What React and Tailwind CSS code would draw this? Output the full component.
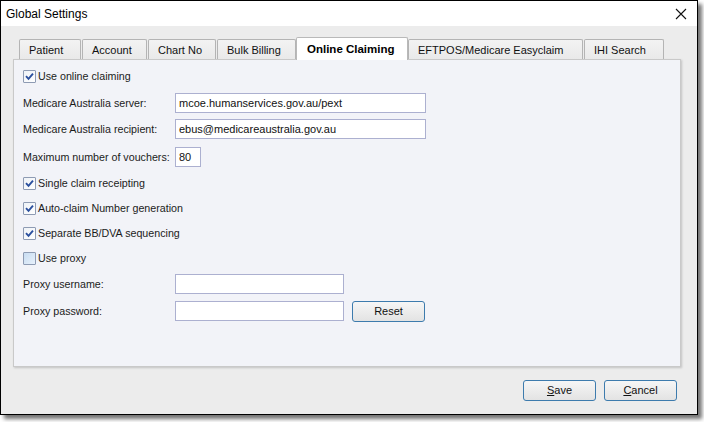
// Global Settings dialog — Online Claiming tab
const FONT = { fontFamily: '"Liberation Sans", Arial, sans-serif' };

const TABS = [
  { label: 'Patient', w: 'w-[62px]', gap: 'mr-[1px]' },
  { label: 'Account', w: 'w-[65px]', gap: 'mr-[1px]' },
  { label: 'Chart No', w: 'w-[68px]', gap: 'mr-[1px]' },
  { label: 'Bulk Billing', w: 'w-[79px]', gap: 'mr-0' },
  { label: 'Online Claiming', w: 'w-[112px]', active: true },
  { label: 'EFTPOS/Medicare Easyclaim', w: 'w-[175px]', gap: 'mr-[1px]' },
  { label: 'IHI Search', w: 'w-[80px]', gap: 'mr-0' },
];

function CheckBox({ checked }) {
  return (
    <span
      className={`w-[13px] h-[13px] shrink-0 border border-[#8e9bb3] rounded-[1px] flex items-center justify-center ${
        checked
          ? 'bg-gradient-to-br from-[#eef2f7] to-[#ffffff]'
          : 'bg-gradient-to-br from-[#c8dcf1] to-[#e8f1fb]'
      }`}
    >
      {checked && (
        <svg width="9" height="9" viewBox="0 0 9 9">
          <path d="M1 4.2 L3.5 6.8 L8 1.6" fill="none" stroke="#2a4f9e" strokeWidth="1.9" />
        </svg>
      )}
    </span>
  );
}

function CheckRow({ label, checked, className = '' }) {
  return (
    <div className={`flex items-center gap-[2px] h-[16px] ${className}`}>
      <CheckBox checked={checked} />
      <span className="leading-none">{label}</span>
    </div>
  );
}

function Field({ label, value = '', width = 'w-[251px]', className = '', children }) {
  return (
    <div className={`flex items-center h-[20px] ${className}`}>
      <span className="w-[152px] shrink-0">{label}</span>
      <div className={`${width} h-[20px] bg-white border border-[#acb0d0] flex items-center px-[3px] text-[11px] text-[#111]`}>
        {value}
      </div>
      {children}
    </div>
  );
}

function Button({ children, className = '' }) {
  return (
    <button
      className={`h-[21px] border border-[#3d7bad] rounded-[3px] bg-gradient-to-b from-[#f6f6f6] to-[#e3e3e3] text-[11px] text-[#111] flex items-center justify-center ${className}`}
      style={FONT}
    >
      {children}
    </button>
  );
}

export default function App() {
  return (
    <div className="w-[704px] h-[422px] bg-white text-[10.7px] text-[#1b1b1b]" style={FONT}>
      <div className="w-[698px] h-[415px] border border-black shadow-[4px_4px_4px_rgba(0,0,0,0.55)] flex flex-col bg-[#ececec]">
        {/* title bar */}
        <div className="h-[25px] bg-white flex items-center justify-between pl-[5px] pr-[10px]">
          <span className="text-[12px] text-black">Global Settings</span>
          <svg width="12" height="12" viewBox="0 0 12 12">
            <path d="M1 1 L11 11 M11 1 L1 11" stroke="#111" strokeWidth="1.1" />
          </svg>
        </div>

        <div className="flex flex-col px-[12px] pt-[11px]">
          {/* tab strip */}
          <div className="flex items-end h-[22px] pl-[6px] relative z-10">
            {TABS.map((t) =>
              t.active ? (
                <div
                  key={t.label}
                  className={`${t.w} h-[23px] -mb-[1px] bg-white border border-b-0 border-[#b9b9b9] rounded-t-[2px] pl-[10px] pt-[3px] font-bold text-[11.5px] text-black`}
                >
                  {t.label}
                </div>
              ) : (
                <div
                  key={t.label}
                  className={`${t.w} ${t.gap} h-[20px] bg-gradient-to-b from-[#f3f3f3] to-[#e9e9e9] border border-b-0 border-[#b4b4b4] rounded-t-[2px] pl-[9px] pt-[2px] text-[11px] text-[#111]`}
                >
                  {t.label}
                </div>
              )
            )}
          </div>

          {/* tab page */}
          <div className="h-[308px] w-[668px] bg-[#f2f3f8] border border-[#c9c9c9] shadow-[1px_1px_2px_rgba(0,0,0,0.18)] pl-[9px] pt-[8px]">
            <CheckRow checked label="Use online claiming" />
            <Field label="Medicare Australia server:" value="mcoe.humanservices.gov.au/pext" className="mt-[9px]" />
            <Field label="Medicare Australia recipient:" value="ebus@medicareaustralia.gov.au" className="mt-[6px]" />
            <Field label="Maximum number of vouchers:" value="80" width="w-[26px]" className="mt-[8px]" />
            <CheckRow checked label="Single claim receipting" className="mt-[8px]" />
            <CheckRow checked label="Auto-claim Number generation" className="mt-[9px]" />
            <CheckRow checked label="Separate BB/DVA sequencing" className="mt-[9px]" />
            <CheckRow label="Use proxy" className="mt-[9px]" />
            <Field label="Proxy username:" width="w-[169px]" className="mt-[8px]" />
            <Field label="Proxy password:" width="w-[169px]" className="mt-[7px]">
              <Button className="w-[73px] ml-[8px]">Reset</Button>
            </Field>
          </div>

          {/* dialog buttons */}
          <div className="flex justify-end gap-[8px] mt-[13px] pr-[8px]">
            <Button className="w-[73px]">
              <span>
                <u>S</u>ave
              </span>
            </Button>
            <Button className="w-[73px]">
              <span>
                <u>C</u>ancel
              </span>
            </Button>
          </div>
        </div>
      </div>
    </div>
  );
}
